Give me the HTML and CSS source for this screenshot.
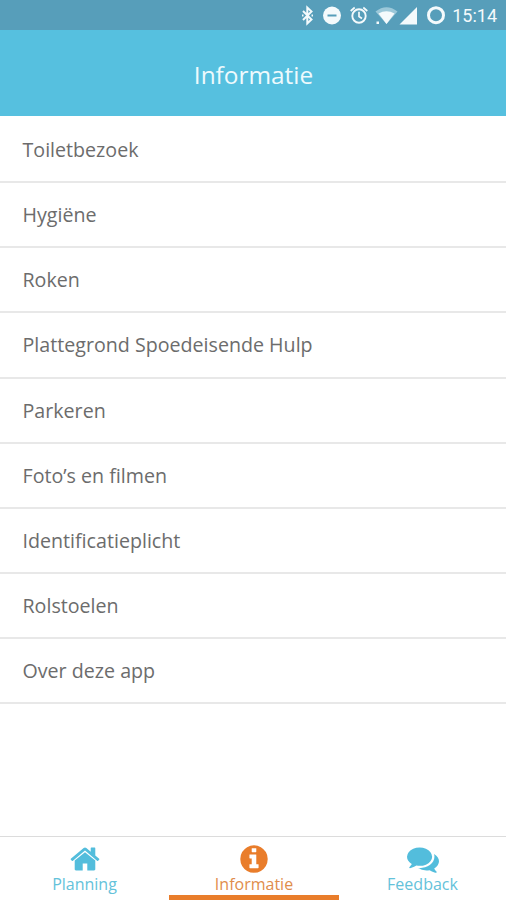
FILE: index.html
```html
<!DOCTYPE html>
<html lang="nl">
<head>
<meta charset="utf-8">
<title>Informatie</title>
<link rel="stylesheet" href="styles.css">
</head>
<body>
<div class="status">
  <svg class="status-icons" viewBox="0 0 150 30" aria-hidden="true">
    <g fill="none" stroke="currentColor">
      <path stroke-width="2" d="M5 11l8.500 8.500l-4.200 4V7.500l4.200 4L5 20M4 15.500h1.500M13.500 15.500h1.500"/>
      <circle cx="61" cy="16" r="6.700" stroke-width="1.900"/>
      <path stroke-width="1.700" d="M61 11.800v4.700l3 2M52.700 11l4-3.500M69.300 11l-4-3.500"/>
      <circle cx="138" cy="15.200" r="7.500" stroke-width="3"/>
    </g>
    <circle cx="34" cy="15.500" r="9" fill="currentColor"/>
    <path class="minus" d="M29.500 14.500h9v2h-9z"/>
    <path class="faded" d="M77.500 11.500q11-8.500 22 0L88.500 24z"/>
    <path fill="currentColor" d="M80.500 13.500q8-4.500 16 0l-8 10.500zM78.500 21.500h2.500v2.500h-2.500zM119 7v17.500h-17.500z"/>
  </svg>
  <span class="clock">15:14</span>
</div>
<header class="header"><h1 class="title">Informatie</h1></header>
<ul class="list">
  <li class="row">Toiletbezoek</li>
  <li class="row">Hygiëne</li>
  <li class="row">Roken</li>
  <li class="row">Plattegrond Spoedeisende Hulp</li>
  <li class="row">Parkeren</li>
  <li class="row">Foto’s en filmen</li>
  <li class="row">Identificatieplicht</li>
  <li class="row">Rolstoelen</li>
  <li class="row">Over deze app</li>
</ul>
<nav class="tabs">
  <a class="tab">
    <svg class="icon" viewBox="0 0 1792 1792"><path d="M1472 992v480q0 26-19 45t-45 19h-384v-384h-256v384h-384q-26 0-45-19t-19-45v-480q0-1 .5-3t.5-3l575-474 575 474q1 2 1 6zm223-69l-62 74q-8 9-21 11h-3q-13 0-21-7l-692-577-692 577q-12 8-24 7-13-2-21-11l-62-74q-8-10-7-23.500t11-21.500l719-599q32-26 76-26t76 26l244 204v-195q0-14 9-23t23-9h192q14 0 23 9t9 23v408l219 182q10 8 11 21.500t-7 23.500z"/></svg>
    <span class="label">Planning</span>
  </a>
  <a class="tab active">
    <svg class="icon" viewBox="0 0 1792 1792"><path d="M1152 1376v-160q0-14-9-23t-23-9h-96v-512q0-14-9-23t-23-9h-320q-14 0-23 9t-9 23v160q0 14 9 23t23 9h96v320h-96q-14 0-23 9t-9 23v160q0 14 9 23t23 9h448q14 0 23-9t9-23zm-128-896v-160q0-14-9-23t-23-9h-192q-14 0-23 9t-9 23v160q0 14 9 23t23 9h192q14 0 23-9t9-23zm640 416q0 209-103 385.500t-279.500 279.500-385.500 103-385.500-103-279.500-279.500-103-385.500 103-385.500 279.500-279.500 385.500-103 385.500 103 279.500 279.500 103 385.500z"/></svg>
    <span class="label">Informatie</span>
  </a>
  <a class="tab">
    <svg class="icon" viewBox="0 0 1792 1792"><path d="M1408 768q0 139-94 257t-256.500 186.500-353.500 68.500q-86 0-176-16-124 88-278 128-36 9-86 16h-3q-11 0-20.500-8t-11.500-21q-1-3-1-6.500t.5-6.500 2-6l2.500-5 3.500-5.500 4-5 4.500-5 4-4.500q5-6 23-25t26-29.500 22.500-29 25-38.500 20.500-44q-124-72-195-177t-71-224q0-139 94-257t256.500-186.500 353.500-68.500 353.500 68.500 256.500 186.500 94 257zm384 256q0 120-71 224.500t-195 176.500q10 24 20.500 44t25 38.500 22.500 29 26 29.500 23 25q1 1 4 4.500t4.500 5 4 5 3.500 5.500l2.500 5 2 6 .5 6.500-1 6.500q-3 14-13 22t-22 7q-50-7-86-16-154-40-278-128-90 16-176 16-271 0-472-132 58 4 88 4 161 0 309-45t264-129q125-92 192-212t67-254q0-77-23-152 129 71 204 178t75 230z"/></svg>
    <span class="label">Feedback</span>
  </a>
</nav>
</body>
</html>
```
FILE: styles.css
```css
* { box-sizing: border-box; }
body {
  margin: 0;
  height: 900px;
  display: flex;
  flex-direction: column;
  background: #fff;
  color: #6c6c6c;
  font-family: "Open Sans", sans-serif;
  overflow: hidden;
}
.status {
  height: 30px;
  flex: none;
  display: flex;
  align-items: center;
  justify-content: flex-end;
  padding-right: 9px;
  background: #579eba;
  color: #f4fafc;
}
.status-icons { width: 150px; height: 30px; margin-right: 4px; }
.minus { fill: #579eba; }
.faded { fill: #9bc8d9; }
.clock { font: 18px/30px Roboto, sans-serif; padding-top: 2px; }
.header {
  height: 86px;
  flex: none;
  display: flex;
  align-items: center;
  justify-content: center;
  background: #56c0df;
}
.title {
  margin: 0;
  padding: 4px 0 0 1px;
  font-size: 24.400px;
  line-height: 32px;
  font-weight: 400;
  color: #eefafd;
}
.list { margin: 0; padding: 1.800px 0 0; list-style: none; flex: 1; }
.row {
  height: 65.200px;
  padding-left: 22.500px;
  border-bottom: 2px solid #e8e8e8;
  font-size: 19.650px;
  line-height: 64px;
}
.tabs {
  height: 64px;
  flex: none;
  display: grid;
  grid-template-columns: 169px 170px 167px;
  border-top: 1px solid #dcdcdc;
}
.tab {
  display: flex;
  flex-direction: column;
  align-items: center;
  padding-top: 6px;
  border-bottom: 5px solid transparent;
  color: #64c2da;
}
.active { color: #df8d4c; border-bottom-color: #e97d2b; }
.icon { width: 32px; height: 32px; flex: none; fill: #53bddc; }
.active .icon { fill: #e97d2b; }
.label { font-size: 16px; line-height: 18px; }
```
